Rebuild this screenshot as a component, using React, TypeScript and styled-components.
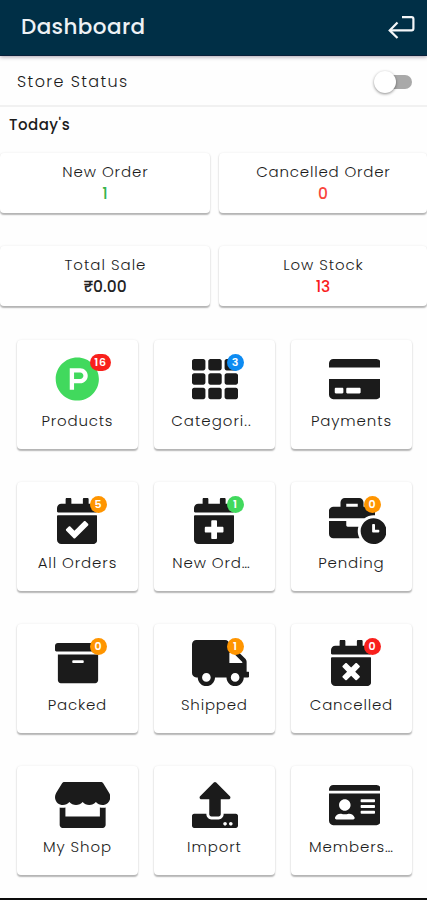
import React from 'react';
import styled, { createGlobalStyle } from 'styled-components';
import type { IconType } from 'react-icons';
import {
  FaArchive,
  FaBusinessTime,
  FaCalendarCheck,
  FaCalendarPlus,
  FaCalendarTimes,
  FaCreditCard,
  FaIdCard,
  FaProductHunt,
  FaStore,
  FaTh,
  FaTruck,
  FaUpload,
} from 'react-icons/fa';

const GlobalStyle = createGlobalStyle`
  * { box-sizing: border-box; }
  body {
    margin: 0;
    background: #fefefe;
    color: #1c1c1c;
    font-family: Poppins, Inter, 'Noto Sans', sans-serif;
    font-weight: 300;
  }
`;

const Screen = styled.div`
  width: 427px;
  height: 900px;
  display: flex;
  flex-direction: column;
  overflow: hidden;
  border-bottom: 2px solid #0c0c0c;
`;

const AppBar = styled.header`
  height: 56px;
  flex: none;
  display: flex;
  align-items: center;
  justify-content: space-between;
  padding: 0 11px 2px 21px;
  background: #002f46;
  border-bottom: 1px solid #08203a;
  box-shadow: 0 1px 4px rgba(40, 20, 50, 0.4);
  z-index: 1;
`;

/* Letter spacing adds a trailing gap, so the margin takes it back. */
const Text = styled.span<{ $spacing: number }>`
  letter-spacing: ${(p) => p.$spacing}px;
  margin-right: ${(p) => -p.$spacing}px;
  white-space: nowrap;
`;

const Title = styled(Text)`
  font-size: 21.5px;
  line-height: 32px;
  font-weight: 500;
  color: #eef2f5;
`;

const StatusRow = styled.section`
  height: 51px;
  flex: none;
  display: flex;
  align-items: center;
  justify-content: space-between;
  padding: 2px 15px 0 17px;
  border-bottom: 2px solid #f1f1f1;
`;

const StatusLabel = styled(Text)`
  font-size: 16px;
  line-height: 24px;
`;

const Switch = styled.div`
  width: 38px;
  height: 22px;
  display: flex;
  align-items: center;
`;

const Track = styled.div`
  width: 34px;
  height: 14px;
  margin-left: 4px;
  border-radius: 7px;
  background: #a9a9a9;
  display: flex;
  align-items: center;
`;

const Thumb = styled.div`
  width: 22px;
  height: 22px;
  flex: none;
  margin-left: -4px;
  border-radius: 50%;
  background: #fff;
  box-shadow: 0 1px 3px rgba(0, 0, 0, 0.45);
`;

const SectionTitle = styled.h2`
  height: 33px;
  flex: none;
  margin: 0;
  padding: 6px 0 0 9px;
  font-size: 15px;
  line-height: 24px;
  font-weight: 500;
`;

const SummaryGrid = styled.section`
  flex: none;
  display: grid;
  grid-template-columns: 210px 208px;
  grid-auto-rows: 60px;
  column-gap: 9px;
  row-gap: 33px;
  margin-top: 13px;
`;

const Card = styled.div`
  background: #fff;
  border-radius: 4px;
  box-shadow: 0 1.5px 1.5px rgba(0, 0, 0, 0.28), 0 0 3px rgba(0, 0, 0, 0.06);
`;

const SummaryCard = styled(Card)`
  display: flex;
  flex-direction: column;
  align-items: center;
  padding-top: 8px;
`;

const SummaryLabel = styled(Text)`
  font-size: 15px;
  line-height: 22px;
`;

const SummaryValue = styled.span<{ $color: string }>`
  font-size: 15.5px;
  line-height: 21px;
  font-weight: 500;
  color: ${(p) => p.$color};
`;

const TileGrid = styled.main`
  flex: none;
  display: grid;
  grid-template-columns: repeat(3, 121px);
  grid-auto-rows: 109px;
  column-gap: 16px;
  row-gap: 33px;
  margin: 34px 0 0 17px;
`;

const Tile = styled(Card)`
  display: flex;
  flex-direction: column;
  align-items: center;
  padding: 16px 1px 0 0;
`;

const IconBox = styled.div<{ $wide: boolean; $width: number }>`
  position: relative;
  width: 45px;
  height: 46px;
  display: flex;
  justify-content: ${(p) => (p.$wide ? 'flex-start' : 'center')};

  > svg {
    flex: none;
    width: ${(p) => p.$width}px;
    height: 46px;
  }
`;

const Badge = styled.span<{ $color: string }>`
  position: absolute;
  top: -2px;
  left: 35px;
  min-width: 17px;
  height: 17px;
  padding: 0 4px;
  border-radius: 9px;
  background: ${(p) => p.$color};
  color: #fff;
  font-size: 11px;
  line-height: 16px;
  font-weight: 600;
  letter-spacing: 0.8px;
  text-indent: 0.8px;
  text-align: center;
`;

/* A clipped label starts further left than a centred one. */
const TileLabel = styled(Text)<{ $clipped: boolean }>`
  margin-top: 7px;
  padding-right: ${(p) => (p.$clipped ? 6 : 0)}px;
  font-size: 15px;
  line-height: 24px;
`;

const ReturnIcon = () => (
  <svg width="28" height="24" viewBox="0 0 28 24" fill="none" stroke="#f3f6f8" strokeWidth="2.2">
    <path d="M14 2.2h9.6q1.8 0 1.8 1.8v9.6q0 1.8-1.8 1.8H2.2" />
    <path d="M9.5 7.4L1.7 15.4l7.8 7.6" />
  </svg>
);

const BLACK = '#1b1b1b';
const ORANGE = '#ff9500';
const RED = '#f9201c';
const GREEN = '#41d95d';

const summaries = [
  { label: 'New Order', spacing: 0.9, value: '1', color: '#37b34a' },
  { label: 'Cancelled Order', spacing: 0.8, value: '0', color: '#f9453c' },
  { label: 'Total Sale', spacing: 1, value: '₹0.00', color: '#222' },
  { label: 'Low Stock', spacing: 0.9, value: '13', color: '#f9201c' },
];

interface TileData {
  label: string;
  spacing: number;
  icon: IconType;
  width: number;
  color?: string;
  wide?: boolean;
  clipped?: boolean;
  badge?: string;
  badgeColor?: string;
}

const tiles: TileData[] = [
  { label: 'Products', spacing: 0.8, icon: FaProductHunt, width: 44.6, color: GREEN, wide: true, badge: '16', badgeColor: RED },
  { label: 'Categori..', spacing: 1, icon: FaTh, width: 46, wide: true, clipped: true, badge: '3', badgeColor: '#0d8bf2' },
  { label: 'Payments', spacing: 0.9, icon: FaCreditCard, width: 51.75, wide: true },
  { label: 'All Orders', spacing: 0.9, icon: FaCalendarCheck, width: 40.25, badge: '5', badgeColor: ORANGE },
  { label: 'New Ord…', spacing: 0.9, icon: FaCalendarPlus, width: 40.25, clipped: true, badge: '1', badgeColor: GREEN },
  { label: 'Pending', spacing: 0.8, icon: FaBusinessTime, width: 57.5, wide: true, badge: '0', badgeColor: ORANGE },
  { label: 'Packed', spacing: 0.8, icon: FaArchive, width: 46, wide: true, badge: '0', badgeColor: ORANGE },
  { label: 'Shipped', spacing: 0.8, icon: FaTruck, width: 57.5, wide: true, badge: '1', badgeColor: ORANGE },
  { label: 'Cancelled', spacing: 0.8, icon: FaCalendarTimes, width: 40.25, badge: '0', badgeColor: RED },
  { label: 'My Shop', spacing: 0.9, icon: FaStore, width: 55.3, wide: true },
  { label: 'Import', spacing: 0.9, icon: FaUpload, width: 46, wide: true },
  { label: 'Members…', spacing: 0.9, icon: FaIdCard, width: 51.75, wide: true },
];

export default function App() {
  return (
    <>
      <GlobalStyle />
      <Screen>
        <AppBar>
          <Title $spacing={0.4}>Dashboard</Title>
          <ReturnIcon />
        </AppBar>
        <StatusRow>
          <StatusLabel $spacing={1.4}>Store Status</StatusLabel>
          <Switch role="switch" aria-checked="false">
            <Track>
              <Thumb />
            </Track>
          </Switch>
        </StatusRow>
        <SectionTitle>
          <Text $spacing={0.5}>Today's</Text>
        </SectionTitle>
        <SummaryGrid>
          {summaries.map((s) => (
            <SummaryCard key={s.label}>
              <SummaryLabel $spacing={s.spacing}>{s.label}</SummaryLabel>
              <SummaryValue $color={s.color}>{s.value}</SummaryValue>
            </SummaryCard>
          ))}
        </SummaryGrid>
        <TileGrid>
          {tiles.map(({ icon: Icon, ...t }) => (
            <Tile key={t.label}>
              <IconBox $wide={!!t.wide} $width={t.width}>
                <Icon color={t.color ?? BLACK} />
                {t.badge && <Badge $color={t.badgeColor ?? RED}>{t.badge}</Badge>}
              </IconBox>
              <TileLabel $spacing={t.spacing} $clipped={!!t.clipped}>
                {t.label}
              </TileLabel>
            </Tile>
          ))}
        </TileGrid>
      </Screen>
    </>
  );
}
